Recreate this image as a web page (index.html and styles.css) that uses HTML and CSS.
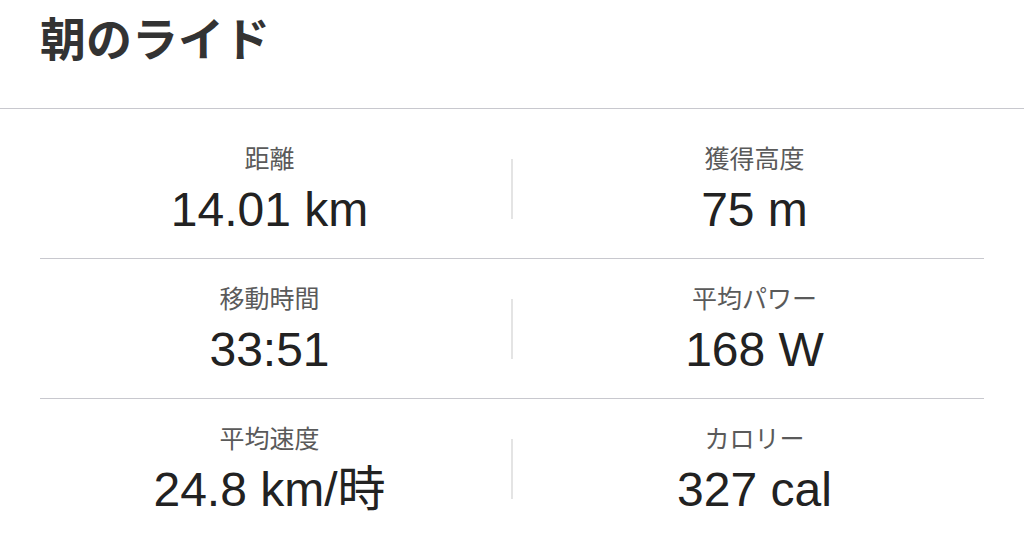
FILE: index.html
```html
<!DOCTYPE html>
<html lang="ja">
<head>
  <meta charset="utf-8">
  <meta name="viewport" content="width=device-width, initial-scale=1">
  <title>朝のライド</title>
  <link rel="stylesheet" href="styles.css">
</head>
<body>
  <div class="header">
    <h1 class="title">朝のライド</h1>
  </div>
  <div class="stats">
    <div class="row">
      <div class="cell">
        <div class="label">距離</div>
        <div class="value">14.01 km</div>
      </div>
      <div class="sep"></div>
      <div class="cell">
        <div class="label">獲得高度</div>
        <div class="value">75 m</div>
      </div>
    </div>
    <div class="row">
      <div class="cell">
        <div class="label">移動時間</div>
        <div class="value">33:51</div>
      </div>
      <div class="sep"></div>
      <div class="cell">
        <div class="label">平均パワー</div>
        <div class="value">168 W</div>
      </div>
    </div>
    <div class="row">
      <div class="cell">
        <div class="label">平均速度</div>
        <div class="value">24.8 km/時</div>
      </div>
      <div class="sep"></div>
      <div class="cell">
        <div class="label">カロリー</div>
        <div class="value">327 cal</div>
      </div>
    </div>
  </div>
</body>
</html>
```

FILE: styles.css
```css
* {
  margin: 0;
  padding: 0;
  box-sizing: border-box;
}

body {
  background: #fff;
  font-family: "Liberation Sans", "Noto Sans CJK JP", sans-serif;
  overflow: hidden;
}

.header {
  height: 109px;
  padding: 13px 0 0 40px;
  border-bottom: 1px solid #c8c8ce;
}

.title {
  font-family: "Noto Sans CJK JP", sans-serif;
  font-size: 46px;
  line-height: 46px;
  font-weight: 700;
  color: #333;
}

.stats {
  padding-top: 10px;
}

.row {
  display: flex;
  align-items: center;
  height: 140px;
  margin: 0 40px;
  border-bottom: 1px solid #c8c8ce;
}

.cell {
  flex: 1;
  display: flex;
  flex-direction: column;
  align-items: center;
  gap: 10px;
  margin-top: 3px;
}

.cell:first-child {
  padding-right: 12px;
}

.cell:last-child {
  padding-left: 12px;
}

.sep {
  width: 2px;
  height: 60px;
  background: #e4e4e4;
}

.label {
  font-family: "Noto Sans CJK JP", sans-serif;
  font-size: 25px;
  line-height: 30px;
  color: #5a5a5a;
}

.value {
  font-size: 48px;
  line-height: 56px;
  color: #222;
}
```
